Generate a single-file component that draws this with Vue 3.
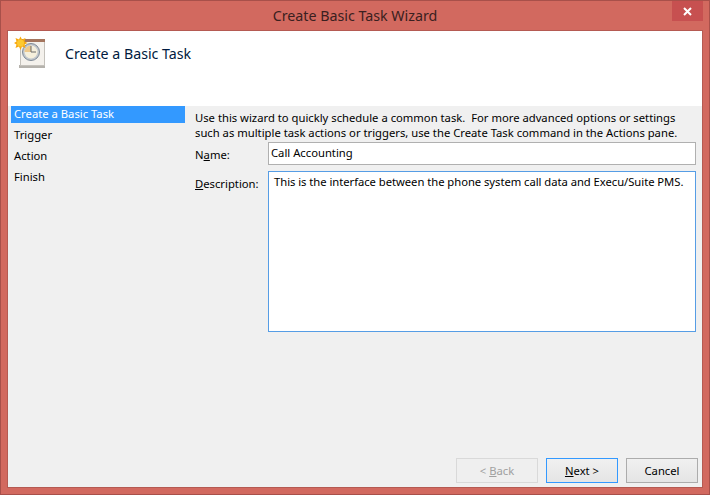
<script setup>
const steps = ['Create a Basic Task', 'Trigger', 'Action', 'Finish']
</script>

<template>
  <div class="window">
    <div class="titlebar">
      <span class="title">Create Basic Task Wizard</span>
      <button class="close" aria-label="Close">
        <svg width="9" height="9" viewBox="0 0 9 9"><path d="M1 1 L8 8 M8 1 L1 8" stroke="#fff" stroke-width="2" fill="none" /></svg>
      </button>
    </div>
    <div class="client">
      <header class="head">
        <svg class="icon" width="32" height="33" viewBox="0 0 32 33">
          <rect x="5" y="29" width="26" height="3" fill="#b5b2ac" />
          <rect x="6.500" y="4.500" width="24" height="25" fill="#f4f1ec" stroke="#c4c1bb" />
          <rect x="6" y="3" width="25" height="3" fill="#a4755e" />
          <circle cx="17" cy="16" r="8.500" fill="#c3c8ce" stroke="#7f8a96" />
          <circle cx="17" cy="16" r="6.500" fill="#f5efdc" />
          <path d="M17 16 V9.500 A6.500 6.500 0 0 0 10.500 16 Z" fill="#eec98c" />
          <path d="M17 10 V16 H22" stroke="#6b6b6b" stroke-width="1" fill="none" />
          <path d="M6.500 0.500 L8 3.500 L11.500 2 L10.500 5.500 L13.500 7 L10.500 8.500 L11.500 12 L8 10.500 L6.500 14 L5 10.500 L1.500 12 L2.500 8.500 L0 7 L2.500 5.500 L1.500 2 L5 3.500 Z" fill="#f7a90f" />
          <circle cx="6.500" cy="7" r="3.500" fill="#fdc92f" />
        </svg>
        <h1 class="heading">Create a Basic Task</h1>
      </header>
      <div class="body">
        <nav class="steps">
          <div v-for="(s, i) in steps" :key="s" class="step" :class="{ active: i === 0 }">{{ s }}</div>
        </nav>
        <main class="main">
          <p class="intro">Use this wizard to quickly schedule a common task.&nbsp; For more advanced options or settings<br>such as multiple task actions or triggers, use the Create Task command in the Actions pane.</p>
          <div class="form">
            <label class="label">N<u>a</u>me:</label>
            <div class="field name">Call Accounting</div>
            <label class="label"><u>D</u>escription:</label>
            <div class="field desc">This is the interface between the phone system call data and Execu/Suite PMS.</div>
          </div>
        </main>
      </div>
      <footer class="foot">
        <button class="btn back" disabled>&lt; <u>B</u>ack</button>
        <button class="btn next"><u>N</u>ext &gt;</button>
        <button class="btn cancel">Cancel</button>
      </footer>
    </div>
  </div>
</template>

<style>
html, body { margin: 0; padding: 0; background: #d2695f; }
</style>

<style scoped>
.window {
  box-sizing: border-box;
  width: 710px;
  height: 495px;
  display: flex;
  flex-direction: column;
  background: #d2695f;
  border: 1px solid #a8504a;
  padding: 0 6px 6px;
  font-family: "Noto Sans", "Open Sans", sans-serif;
  font-size: 11.25px;
  color: #000;
}
.titlebar {
  height: 29px;
  flex: none;
  display: flex;
  align-items: center;
  justify-content: center;
  position: relative;
}
.title { font-size: 14.25px; color: #3a2020; }
.close {
  position: absolute;
  top: 0;
  right: 0;
  width: 31px;
  height: 20px;
  border: 0;
  padding: 0;
  background: #c75050;
  display: flex;
  align-items: center;
  justify-content: center;
}
.client {
  flex: 1;
  min-height: 0;
  display: flex;
  flex-direction: column;
  background: #f0f0f0;
  border: 1px solid #b55a52;
}
.head {
  height: 75px;
  flex: none;
  background: #fff;
  display: flex;
  align-items: flex-start;
}
.icon { margin: 5px 0 0 6px; flex: none; }
.heading {
  margin: 12px 0 0 19px;
  font-size: 14.2px;
  font-weight: 400;
  line-height: 22px;
  color: #001a40;
}
.body { flex: 1; min-height: 0; display: flex; }
.steps { width: 174px; margin-left: 3px; flex: none; }
.step { height: 21px; line-height: 21px; padding-left: 3px; }
.step.active { height: 17px; line-height: 16px; background: #3399ff; color: #fff; margin-bottom: 1px; }
.main { flex: 1; min-width: 0; padding: 4px 6px 0 10px; }
.intro { margin: 0 0 2px; line-height: 15px; white-space: nowrap; }
.form {
  display: grid;
  grid-template-columns: 73px 1fr;
  row-gap: 5px;
}
.label { line-height: 22px; padding-top: 2px; }
.field {
  box-sizing: border-box;
  background: #fff;
  border: 1px solid #abadb3;
  padding-left: 2px;
}
.name { height: 23px; line-height: 20px; border-color: #b0b0b0; }
.desc { height: 161px; border-color: #569de5; padding: 0 5px; line-height: 20px; letter-spacing: -0.04px; }
.foot {
  flex: none;
  display: flex;
  justify-content: flex-end;
  gap: 8px;
  padding: 0 4px 4px 0;
}
.btn {
  box-sizing: border-box;
  height: 25px;
  width: 72px;
  font: inherit;
  padding: 0;
  border: 1px solid #acacac;
  background: linear-gradient(#f0f0f0, #e5e5e5);
  color: #000;
}
.back { width: 82px; background: #efefef; border-color: #d9d9d9; color: #a0a0a0; }
.next { border-color: #3399ff; }
</style>
